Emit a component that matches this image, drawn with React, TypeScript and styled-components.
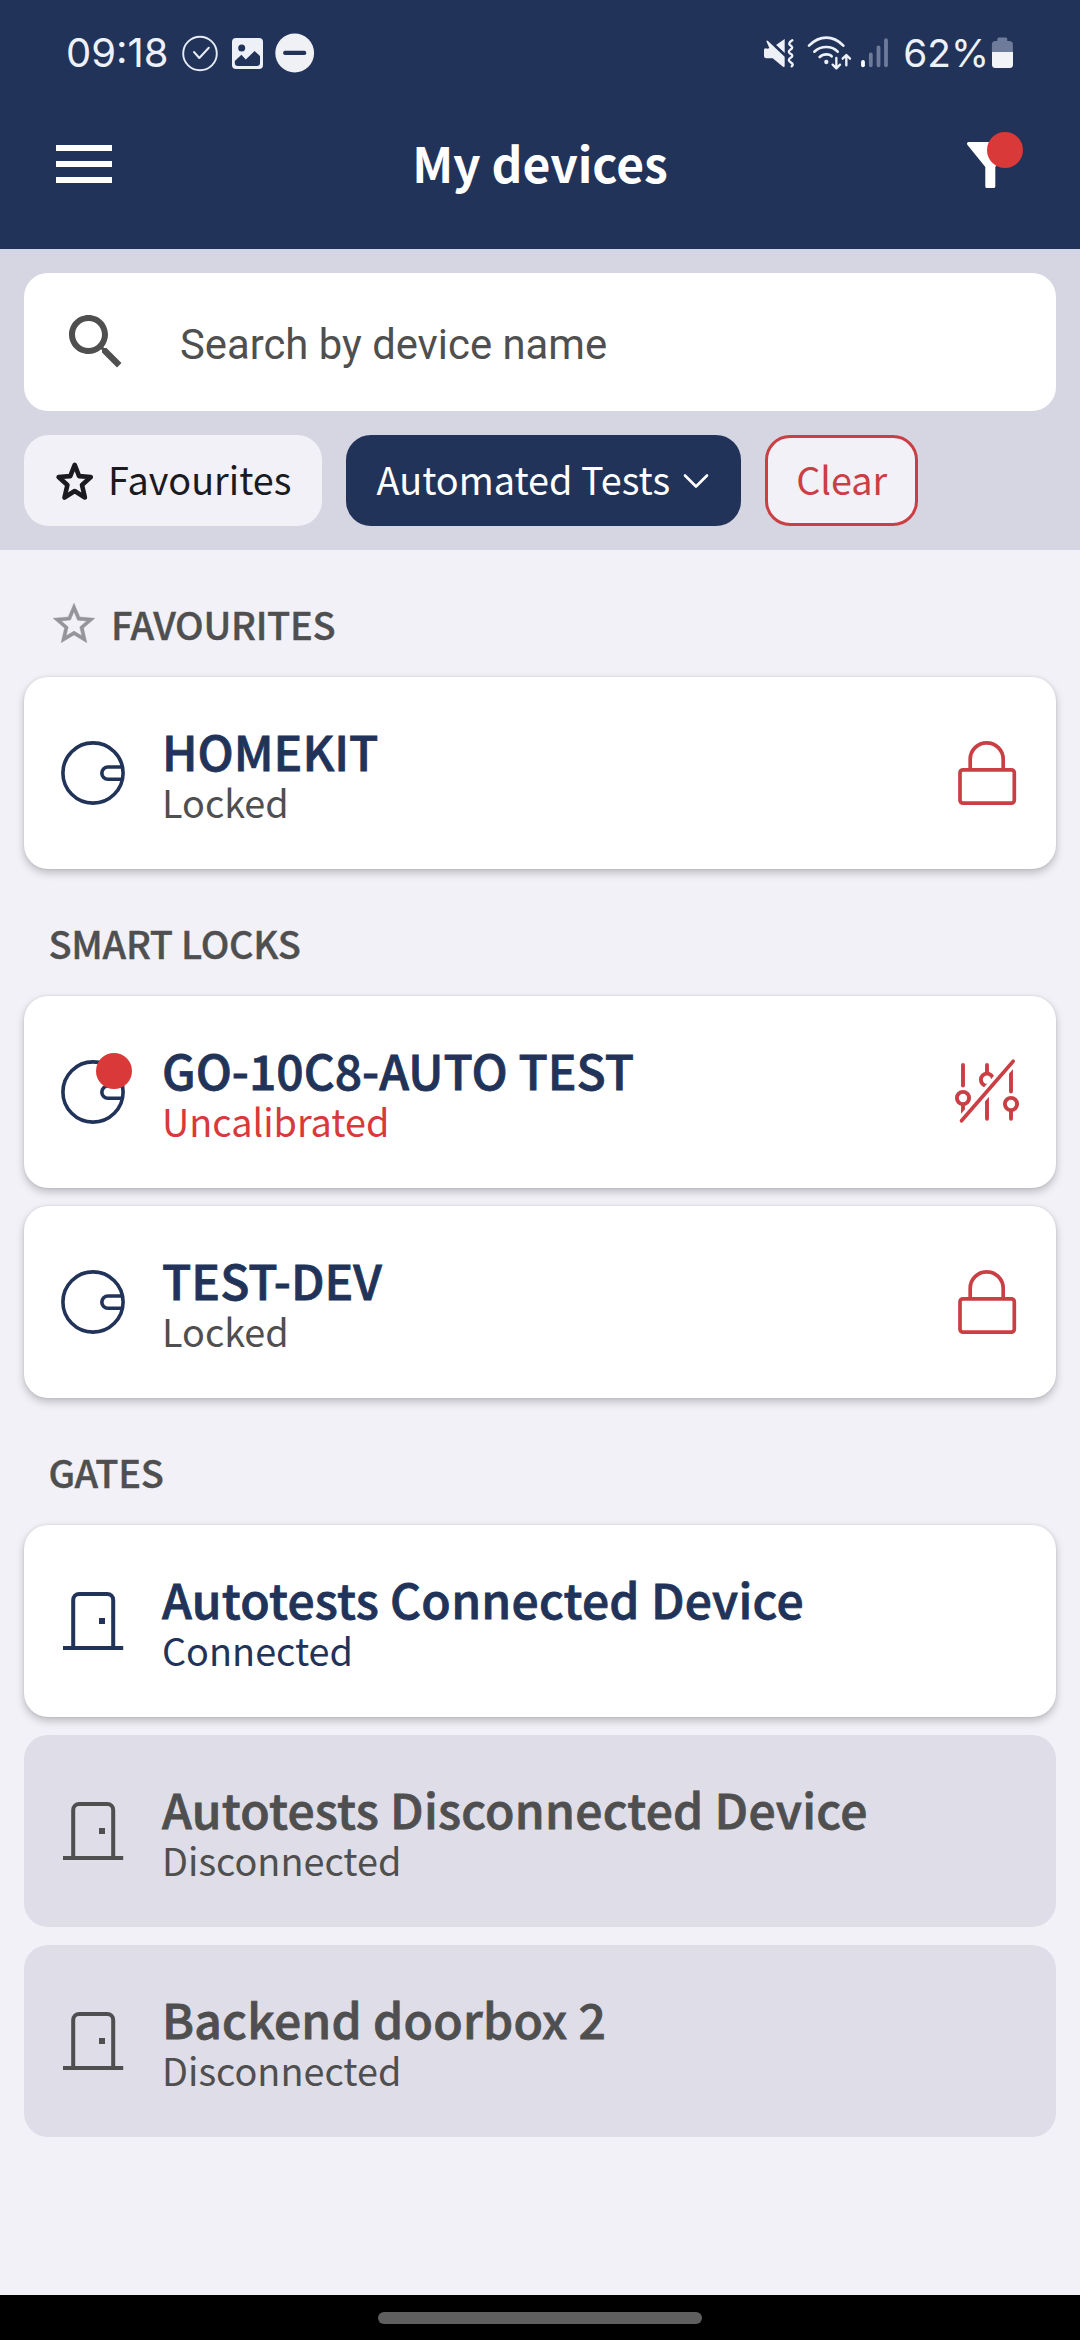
import React from 'react';
import styled, { createGlobalStyle, css } from 'styled-components';

const color = {
  navy: '#223359',
  page: '#f2f1f8',
  band: '#d6d5e2',
  disabled: '#dedde8',
  grey: '#4f4f4f',
  red: '#d93939',
  line: '#c93f44',
};

const GlobalStyle = createGlobalStyle`
  *, *::before, *::after { box-sizing: border-box; }
  body { margin: 0; background: ${color.page}; }
  svg { display: block; flex: none; overflow: visible; }
`;

const Screen = styled.div`
  display: flex;
  flex-direction: column;
  width: 1080px;
  height: 2340px;
  background: ${color.page};
  font-family: 'Noto Sans CJK SC', 'Noto Sans', sans-serif;
  overflow: hidden;
`;

/* ---------- header ---------- */

const Header = styled.header`
  flex: none;
  height: 249px;
  background: ${color.navy};
`;

const StatusBar = styled.div`
  display: flex;
  justify-content: space-between;
  height: 106px;
  padding: 0 67px 0 66px;
  color: #edf1fb;
  font-family: Inter, Roboto, sans-serif;
`;

const StatusGroup = styled.div<{ $gap?: number }>`
  display: flex;
  align-items: center;
  gap: ${p => p.$gap ?? 0}px;
`;

const Clock = styled.span`
  width: 104px;
  font-size: 40px;
  line-height: 48px;
`;

const Percent = styled.span`
  margin: 0 2px 0 13px;
  font-size: 38.8px;
  line-height: 48px;
`;

const Spaced = styled.span<{ $left: number }>`
  margin-left: ${p => p.$left}px;
`;

const AppBar = styled.div`
  display: grid;
  grid-template-columns: 60px 1fr 60px;
  align-items: center;
  height: 116px;
  padding: 0 56px;
`;

const Menu = styled.div`
  display: flex;
  flex-direction: column;
  gap: 10px;
  width: 56px;
`;

const MenuLine = styled.span`
  height: 6px;
  background: #fff;
`;

const Title = styled.h1`
  margin: 0;
  padding-bottom: 4px;
  color: #fff;
  font-size: 48px;
  font-weight: 700;
  line-height: 60px;
  text-align: center;
`;

const Badged = styled.div<{ $end?: boolean }>`
  position: relative;
  flex: none;
  ${p => p.$end && css`
    justify-self: end;
    margin: 2px 11px 0 0;
  `}
`;

const Dot = styled.span<{ $x: number; $y: number }>`
  position: absolute;
  left: ${p => p.$x}px;
  top: ${p => p.$y}px;
  width: 36px;
  height: 36px;
  border-radius: 50%;
  background: ${color.red};
`;

/* ---------- filters ---------- */

const FilterBand = styled.section`
  flex: none;
  height: 301px;
  padding: 20px 24px 24px;
  border-top: 4px solid #d1d6e7;
  background: ${color.band};
`;

const SearchBox = styled.div`
  display: flex;
  align-items: center;
  gap: 48px;
  height: 138px;
  padding: 0 36px;
  border-radius: 24px;
  background: #fff;
`;

const SearchHint = styled.span`
  padding-top: 5px;
  color: ${color.grey};
  font-family: Roboto, sans-serif;
  font-size: 41.8px;
  line-height: 50px;
`;

const Chips = styled.div`
  display: flex;
  gap: 24px;
  margin-top: 24px;
`;

const Chip = styled.button<{ $tone?: 'active' | 'danger' }>`
  display: flex;
  align-items: center;
  height: 91px;
  padding: 0 27px;
  border: 3px solid ${color.page};
  border-radius: 25px;
  background: ${color.page};
  color: #1b1b1f;
  font: 400 37.8px/50px 'Noto Sans CJK SC', 'Noto Sans', sans-serif;
  ${p => p.$tone === 'active' && css`
    border-color: ${color.navy};
    background: ${color.navy};
    color: #fff;
  `}
  ${p => p.$tone === 'danger' && css`
    border-color: ${color.line};
    color: ${color.line};
  `}
`;

const ChipLabel = styled.span<{ $before?: number; $after?: number }>`
  padding-bottom: 4px;
  margin: 0 ${p => p.$after ?? 0}px 0 ${p => p.$before ?? 0}px;
  white-space: nowrap;
`;

/* ---------- device list ---------- */

const List = styled.main`
  flex: 1;
  padding: 0 24px;
`;

const SectionTitle = styled.h2`
  display: flex;
  align-items: center;
  gap: 12.5px;
  height: 127px;
  margin: 0;
  padding: 20px 0 0 24.5px;
  color: ${color.grey};
  font-size: 38px;
  font-weight: 500;
  letter-spacing: -0.3px;
  line-height: 50px;
  -webkit-text-stroke: 0.4px currentColor;
`;

const Cards = styled.div`
  display: flex;
  flex-direction: column;
  gap: 18px;
`;

const Card = styled.article<{ $off?: boolean }>`
  display: flex;
  align-items: center;
  height: 192px;
  padding: 0 36px;
  border-radius: 24px;
  background: #fff;
  color: ${color.navy};
  box-shadow: 0 4px 8px rgba(0, 0, 0, 0.22), 0 0 3px rgba(0, 0, 0, 0.1);
  ${p => p.$off && css`
    background: ${color.disabled};
    color: ${color.grey};
    box-shadow: none;
  `}
`;

const CardText = styled.div`
  flex: 1;
  margin-left: 36px;
  padding-top: 2px;
`;

const Name = styled.div<{ $spacing: number }>`
  margin-bottom: 1px;
  font-size: 48px;
  font-weight: 500;
  letter-spacing: ${p => p.$spacing}px;
  line-height: 53px;
  -webkit-text-stroke: 0.8px currentColor;
`;

const State = styled.div<{ $color: string }>`
  color: ${p => p.$color};
  font-size: 37.8px;
  line-height: 47px;
`;

/* ---------- system navigation ---------- */

const NavBar = styled.footer`
  display: flex;
  flex: none;
  justify-content: center;
  height: 45px;
  padding-top: 17px;
  background: #000;
`;

const Handle = styled.span`
  width: 324px;
  height: 12px;
  border-radius: 6px;
  background: #5f5f5f;
`;

/* ---------- icons ---------- */

const CheckCircle = () => (
  <svg width="40" height="40" viewBox="0 0 40 40" fill="none" stroke="#e6ebf7" strokeLinecap="round" strokeLinejoin="round">
    <circle cx="20" cy="20.5" r="16.8" strokeWidth="1.9" />
    <path d="M14 19l5.3 6 9.5-10.3" strokeWidth="2" />
  </svg>
);

const Picture = () => (
  <svg width="34" height="34" viewBox="230 36 34 34">
    <rect x="232" y="38" width="31" height="31" rx="4" fill="#edf0f7" />
    <circle cx="241.7" cy="48" r="3.5" fill={color.navy} />
    <path d="M234.8 61l6.6-6.2 4.4 4.6 8.8-8.5 5.4 5.2v6.6q0 3.2-3.2 3.2h-18.8q-3.2 0-3.2-3.2z" fill={color.navy} />
  </svg>
);

const DoNotDisturb = () => (
  <svg width="42" height="42" viewBox="0 0 42 42">
    <circle cx="20.7" cy="21" r="19.4" fill="#f0f1f5" />
    <rect x="9.2" y="18.8" width="23" height="4.2" rx="1.8" fill={color.navy} />
  </svg>
);

const Muted = () => (
  <svg width="32" height="34" viewBox="66 47 96 102" fill="#edf0f7">
    <path d="M131 56v42l-26-24z" />
    <path d="M69 89q0-6 6-6h10L76 63q1-4 5-1l50 47v29q-1 4-5 1L95 114H76q-7 0-7-7z" />
    <path d="M84 86L70 71v12z" fill={color.navy} />
    <path d="M86 60l48 45" stroke={color.navy} strokeWidth="4" fill="none" />
    <path d="M154 60q-14 9-7 14 13 8 1 14-9 6 0 12 12 6 0 13-9 6 0 12l6 5q3 4-2 8" fill="none" stroke="#edf0f7" strokeWidth="7" strokeLinecap="round" />
  </svg>
);

const Wifi = () => (
  <svg width="46" height="36" viewBox="198 44 138 108" fill="none" stroke="#edf1fb" strokeWidth="8" strokeLinecap="round" strokeLinejoin="round">
    <path d="M204 76Q228 52 256 52T307 76M220 94q15-14 36-14t34 14M236 110q8-8 20-8t16 6" />
    <circle cx="256" cy="125" r="6.5" fill="#edf1fb" stroke="none" />
    <path d="M286 113v30M275 133l11 11 11-11M316 135v-30M305 115l11-11 11 11" strokeWidth="7" />
  </svg>
);

const Signal = () => (
  <svg width="30" height="34" viewBox="859 36 30 34" strokeWidth="3.8" strokeLinecap="round" stroke="#6d7a9a">
    <path d="M862 62v3.3" stroke="#fff" />
    <path d="M869.8 54.5v10.8M877.5 47.5v17.8M885 40.2v25.1" />
  </svg>
);

const Battery = () => (
  <svg width="22" height="34" viewBox="991 36 22 34">
    <path d="M997.3 41v-2q0-1.5 1.5-1.5h7q1.5 0 1.5 1.5v2h2q3.6 0 3.6 3.6V53h-21V44.6q0-3.6 3.6-3.6z" fill="#6e7b9a" />
    <path d="M992 52h21v12.5q0 3.5-3.5 3.5h-14q-3.5 0-3.5-3.5z" fill="#f1f3f7" />
  </svg>
);

const Funnel = () => (
  <svg width="46" height="46" viewBox="0 0 46 46" fill="#fff">
    <path d="M1.5 0h43q2.5.8 1 3L28.3 25v19.5q0 1.5-1.5 1.5h-7q-1.5 0-1.5-1.5V25L.5 3Q-1 .8 1.5 0z" />
  </svg>
);

const Magnifier = () => (
  <svg width="72" height="72" viewBox="0 0 24 24" fill={color.grey}>
    <path d="M15.5 14h-.79l-.28-.27C15.41 12.59 16 11.11 16 9.5 16 5.91 13.09 3 9.5 3S3 5.91 3 9.5 5.91 16 9.5 16c1.61 0 3.09-.59 4.23-1.57l.27.28v.79l5 4.99L20.49 19l-4.99-5zm-6 0C7.01 14 5 11.99 5 9.5S7.01 5 9.5 5 14 7.01 14 9.5 11.99 14 9.5 14z" />
  </svg>
);

const ChipStar = () => (
  <svg width="42" height="42" viewBox="0 0 42 42" fill="none" stroke="#1b1b1f" strokeWidth="4.6" strokeLinejoin="round">
    <path d="M20.7 4.8l4.4 11.3 11.7.9-8.8 8 2.9 12.5-10.2-6.5-10.2 6.5 2.9-12.5-8.8-8 11.7-.9z" />
  </svg>
);

const SectionStar = () => (
  <svg width="50" height="50" viewBox="0 0 24 24" fill="#949499" stroke="#949499" strokeWidth="0.2">
    <path d="M22 9.24l-7.19-.62L12 2 9.19 8.63 2 9.24l5.46 4.73L5.82 21 12 17.27 18.18 21l-1.63-7.03L22 9.24zM12 15.4l-3.76 2.27 1-4.28-3.32-2.88 4.38-.38L12 6.1l1.71 4.04 4.38.38-3.32 2.88 1 4.28L12 15.4z" />
  </svg>
);

const Chevron = () => (
  <svg width="30" height="20" viewBox="0 0 30 20" fill="none" stroke="#fff" strokeWidth="2.6" strokeLinecap="round" strokeLinejoin="round">
    <path d="M4 4.5l11 11 11-11" />
  </svg>
);

const SmartLock = () => (
  <svg width="66" height="66" viewBox="0 0 66 66" fill="none" stroke="currentColor" strokeWidth="3.6">
    <circle cx="33" cy="33" r="30.1" />
    <path d="M62 27H48a6.15 6.15 0 0 0 0 12.3h14" />
  </svg>
);

const Door = () => (
  <svg width="66" height="66" viewBox="0 0 66 66" fill="none" stroke="currentColor" strokeWidth="4">
    <path d="M13.2 60V12a6 6 0 0 1 6-6h28a6 6 0 0 1 6 6v48" />
    <path d="M3 60h60.2" />
    <rect x="39" y="30" width="6" height="6" fill="currentColor" stroke="none" />
  </svg>
);

const Padlock = () => (
  <svg width="66" height="66" viewBox="0 0 66 66" fill="none" stroke={color.line} strokeWidth="3.7">
    <rect x="6" y="29.8" width="54.3" height="33.4" rx="3" />
    <path d="M16.2 29.5V19.3a16.5 16.5 0 0 1 33 0v10.2" />
  </svg>
);

const Uncalibrated = () => (
  <svg width="66" height="66" viewBox="0 0 66 66" fill="none" stroke={color.line} strokeWidth="3.9" strokeLinecap="round">
    <path d="M9 6v20.5M9 46v12M33 6v8M33 28v31.8M57 6v26.5M57 52v7.8" />
    <circle cx="9" cy="39" r="6.1" />
    <circle cx="33" cy="20.7" r="6.1" />
    <circle cx="57" cy="45" r="6.1" />
    <path d="M4 66L62-1" stroke="#fff" strokeWidth="10" />
    <path d="M7.5 61.8L59.2 2.2" strokeWidth="3.6" />
  </svg>
);

/* ---------- data ---------- */

type Device = {
  name: string;
  state: string;
  kind: 'lock' | 'gate';
  action?: 'locked' | 'uncalibrated';
  spacing?: number;
};

type Section = { title: string; starred?: boolean; devices: Device[] };

const sections: Section[] = [
  {
    title: 'FAVOURITES',
    starred: true,
    devices: [{ name: 'HOMEKIT', state: 'Locked', kind: 'lock', action: 'locked' }],
  },
  {
    title: 'SMART LOCKS',
    devices: [
      { name: 'GO-10C8-AUTO TEST', state: 'Uncalibrated', kind: 'lock', action: 'uncalibrated' },
      { name: 'TEST-DEV', state: 'Locked', kind: 'lock', action: 'locked' },
    ],
  },
  {
    title: 'GATES',
    devices: [
      { name: 'Autotests Connected Device', state: 'Connected', kind: 'gate', spacing: 0.25 },
      { name: 'Autotests Disconnected Device', state: 'Disconnected', kind: 'gate', spacing: 0.25 },
      { name: 'Backend doorbox 2', state: 'Disconnected', kind: 'gate', spacing: 0.25 },
    ],
  },
];

const stateColor: Record<string, string> = {
  Locked: color.grey,
  Uncalibrated: color.red,
  Connected: color.navy,
  Disconnected: color.grey,
};

const DeviceCard = ({ device }: { device: Device }) => (
  <Card $off={device.state === 'Disconnected'}>
    <Badged>
      {device.kind === 'lock' ? <SmartLock /> : <Door />}
      {device.action === 'uncalibrated' && <Dot $x={36} $y={-6} />}
    </Badged>
    <CardText>
      <Name $spacing={device.spacing ?? 0}>{device.name}</Name>
      <State $color={stateColor[device.state]}>{device.state}</State>
    </CardText>
    {device.action === 'locked' && <Padlock />}
    {device.action === 'uncalibrated' && <Uncalibrated />}
  </Card>
);

export default function App() {
  return (
    <Screen>
      <GlobalStyle />
      <Header>
        <StatusBar>
          <StatusGroup $gap={10}>
            <Clock>09:18</Clock>
            <CheckCircle />
            <Picture />
            <DoNotDisturb />
          </StatusGroup>
          <StatusGroup>
            <Muted />
            <Spaced $left={12}><Wifi /></Spaced>
            <Spaced $left={7}><Signal /></Spaced>
            <Percent>62%</Percent>
            <Battery />
          </StatusGroup>
        </StatusBar>
        <AppBar>
          <Menu>
            <MenuLine />
            <MenuLine />
            <MenuLine />
          </Menu>
          <Title>My devices</Title>
          <Badged $end>
            <Funnel />
            <Dot $x={20} $y={-10} />
          </Badged>
        </AppBar>
      </Header>
      <FilterBand>
        <SearchBox>
          <Magnifier />
          <SearchHint>Search by device name</SearchHint>
        </SearchBox>
        <Chips>
          <Chip>
            <ChipStar />
            <ChipLabel $before={12} $after={1}>Favourites</ChipLabel>
          </Chip>
          <Chip $tone="active">
            <ChipLabel $after={11}>Automated Tests</ChipLabel>
            <Chevron />
          </Chip>
          <Chip $tone="danger">
            <ChipLabel $before={1} $after={1}>Clear</ChipLabel>
          </Chip>
        </Chips>
      </FilterBand>
      <List>
        {sections.map(section => (
          <section key={section.title}>
            <SectionTitle>
              {section.starred && <SectionStar />}
              {section.title}
            </SectionTitle>
            <Cards>
              {section.devices.map(device => (
                <DeviceCard key={device.name} device={device} />
              ))}
            </Cards>
          </section>
        ))}
      </List>
      <NavBar>
        <Handle />
      </NavBar>
    </Screen>
  );
}
